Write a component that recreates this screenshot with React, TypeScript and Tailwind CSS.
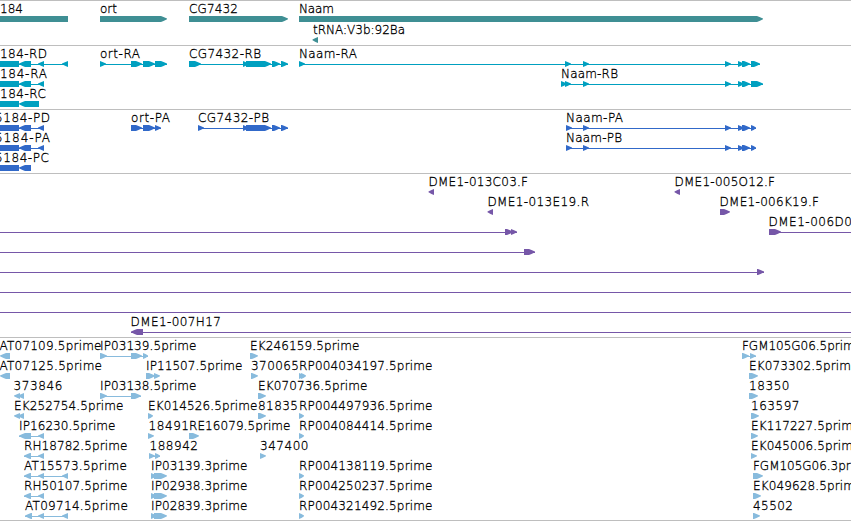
type Label = [text: string, start: number, end: number];
type Exon = [start: number, end: number];
type Row = {
  labels?: Label[];
  right?: Exon[];
  left?: Exon[];
  blocks?: Exon[];
  lines?: Exon[];
};
type TrackData = { name: string; color: string; rowClass: string; heightClass: string; rows: Row[] };

const tracks: TrackData[] = [
  {
    name: 'genes',
    color: '#3f8f94',
    rowClass: 'h-[21px]',
    heightClass: 'h-[45px]',
    rows: [
      {
        labels: [['184', 0, 23], ['ort', 100, 117], ['CG7432', 189, 238], ['Naam', 299, 334]],
        blocks: [[0, 68]],
        right: [[100, 167], [189, 288], [299, 763]],
      },
      { labels: [['tRNA:V3b:92Ba', 313, 405]], left: [[312.5, 318]] },
    ],
  },
  {
    name: 'transcripts',
    color: '#00a0c0',
    rowClass: 'h-5',
    heightClass: 'h-16',
    rows: [
      {
        labels: [['184-RD', 0, 47], ['ort-RA', 100, 140], ['CG7432-RB', 189, 261], ['Naam-RA', 299, 357]],
        lines: [[0, 68], [100, 167], [189, 288], [299, 760]],
        blocks: [[0, 19]],
        left: [[19, 31], [38, 44], [62, 68]],
        right: [
          [100, 106], [131, 142], [143, 155], [155, 167],
          [189, 201], [243, 248], [246, 271], [272, 280], [281, 288],
          [299, 305], [565, 571], [583, 589], [725, 731], [738, 744], [742, 750], [751, 760],
        ],
      },
      {
        labels: [['184-RA', 0, 47], ['Naam-RB', 561, 618]],
        lines: [[0, 44], [561, 763]],
        blocks: [[0, 19]],
        left: [[19, 31], [38, 44]],
        right: [[561, 567], [565, 571], [583, 589], [725, 731], [738, 744], [742, 750], [751, 763]],
      },
      { labels: [['184-RC', 0, 46]], blocks: [[0, 19], [28, 39]], left: [[19, 31]] },
    ],
  },
  {
    name: 'proteins',
    color: '#3169c9',
    rowClass: 'h-5',
    heightClass: 'h-16',
    rows: [
      {
        labels: [['5184-PD', -5, 50], ['ort-PA', 131, 170], ['CG7432-PB', 198, 269], ['Naam-PA', 566, 623]],
        lines: [[0, 44], [131, 161], [198, 288], [566, 756]],
        blocks: [[0, 19]],
        left: [[19, 31], [38, 44]],
        right: [
          [131, 142], [143, 155], [155, 161],
          [198, 204], [243, 248], [246, 271], [272, 280], [281, 288],
          [566, 572], [583, 589], [725, 731], [738, 744], [742, 750], [751, 756],
        ],
      },
      {
        labels: [['5184-PA', -5, 50], ['Naam-PB', 566, 622]],
        lines: [[0, 44], [566, 756]],
        blocks: [[0, 19]],
        left: [[19, 31], [38, 44]],
        right: [[566, 572], [583, 589], [725, 731], [738, 744], [742, 750], [751, 756]],
      },
      { labels: [['5184-PC', -5, 49]], blocks: [[0, 19]], left: [[19, 31]] },
    ],
  },
  {
    name: 'clones',
    color: '#7657a8',
    rowClass: 'h-5',
    heightClass: 'h-[164px]',
    rows: [
      { labels: [['DME1-013C03.F', 428.5, 528], ['DME1-005O12.F', 674.5, 775]], left: [[428.5, 434], [674.5, 680]] },
      { labels: [['DME1-013E19.R', 487.5, 589], ['DME1-006K19.F', 719.5, 819]], left: [[487.5, 493]], right: [[720, 730]] },
      { labels: [['DME1-006D0', 768.5, 852]], lines: [[0, 517], [769, 851]], right: [[505, 513], [511, 517], [769, 781]] },
      { lines: [[0, 535]], right: [[524, 535]] },
      { lines: [[0, 764]], right: [[757, 764]] },
      { lines: [[0, 851]] },
      { lines: [[0, 851]] },
      { labels: [['DME1-007H17', 130.5, 221]], lines: [[131, 851]], left: [[131, 143]] },
    ],
  },
  {
    name: 'ests',
    color: '#88bbdd',
    rowClass: 'h-5',
    heightClass: 'h-[184px]',
    rows: [
      {
        labels: [['AT07109.5prime', -0.5, 101.5], ['IP03139.5prime', 100, 196.5], ['EK246159.5prime', 250, 359.5], ['FGM105G06.5prime', 742, 862]],
        lines: [[100, 148], [742, 756]],
        left: [[0, 10]],
        right: [[100, 107], [131, 142], [143, 148], [250, 258], [742, 749], [750, 756]],
      },
      {
        labels: [['AT07125.5prime', -0.5, 102], ['IP11507.5prime', 146, 242.5], ['370065', 251, 299], ['RP004034197.5prime', 299, 432.5], ['EK073302.5prime', 749, 858.5]],
        left: [[0, 10]],
        right: [[146, 155], [154, 160], [251, 258], [299, 305], [301, 306], [749, 758]],
      },
      {
        labels: [['373846', 13.5, 62.5], ['IP03138.5prime', 100, 196.5], ['EK070736.5prime', 258, 367.5], ['18350', 749, 789.5]],
        lines: [[100, 141]],
        left: [[14, 20], [18, 24]],
        right: [[100, 107], [131, 141], [258, 266], [749, 758]],
      },
      {
        labels: [['EK252754.5prime', 14, 123.5], ['EK014526.5prime', 148, 257.5], ['81835', 258, 298], ['RP004497936.5prime', 299, 432.5], ['163597', 751, 799.5]],
        left: [[14, 20], [18, 24]],
        right: [[148, 153], [258, 266], [299, 304], [751, 759]],
      },
      {
        labels: [['IP16230.5prime', 19, 115.5], ['18491', 148.5, 189], ['RE16079.5prime', 189, 290.5], ['RP004084414.5prime', 299, 432.5], ['EK117227.5prime', 751, 860.5]],
        lines: [[19, 44]],
        left: [[19, 31], [38, 44]],
        right: [[148, 154], [189, 199], [299, 304], [751, 758]],
      },
      {
        labels: [['RH18782.5prime', 24, 127.5], ['188942', 149.5, 198], ['347400', 260, 308.5], ['EK045006.5prime', 751, 860.5]],
        lines: [[24, 44], [149, 160]],
        left: [[24, 31], [38, 44]],
        right: [[149, 155], [155, 160], [260, 266], [751, 757]],
      },
      {
        labels: [['AT15573.5prime', 24, 127], ['IP03139.3prime', 151, 247.5], ['RP004138119.5prime', 299, 432.5], ['FGM105G06.3prime', 753, 873]],
        lines: [[24, 68]],
        left: [[24, 31], [38, 44], [62, 68]],
        right: [[151, 157], [154, 167], [299, 304], [753, 763]],
      },
      {
        labels: [['RH50107.5prime', 24, 127.5], ['IP02938.3prime', 151, 247.5], ['RP004250237.5prime', 299, 432.5], ['EK049628.5prime', 753, 862.5]],
        lines: [[24, 44]],
        left: [[24, 31], [38, 44]],
        right: [[151, 157], [154, 167], [299, 304], [753, 761]],
      },
      {
        labels: [['AT09714.5prime', 25, 128], ['IP02839.3prime', 151, 247.5], ['RP004321492.5prime', 299, 432.5], ['45502', 753, 793]],
        lines: [[25, 68]],
        left: [[25, 32], [38, 44], [62, 68]],
        right: [[151, 157], [154, 167], [299, 304], [753, 760]],
      },
    ],
  },
];

const TOP = 14;
const BOTTOM = 20;

// Exon body with a short stepped head that shows the strand.
function arrow(from: number, to: number) {
  const dir = Math.sign(to - from);
  const head = to - dir * Math.min(6, Math.abs(to - from));
  return `${from},${TOP} ${head},${TOP} ${head + dir * 2.5},${TOP + 1} ${to},${TOP + 2.4} ${to},${TOP + 3.2} ${head + dir * 2.5},${BOTTOM - 1} ${head},${BOTTOM} ${from},${BOTTOM}`;
}

function FeatureRow({ row, color, rowClass }: { row: Row; color: string; rowClass: string }) {
  return (
    <svg className={`block w-[851px] shrink-0 overflow-visible ${rowClass}`} fill={color}>
      {row.lines?.map(([a, b]) => <rect key={`l${a}`} x={a} y={17} width={b - a} height={1} />)}
      {row.blocks?.map(([a, b]) => <rect key={`b${a}`} x={a} y={TOP} width={b - a} height={6} />)}
      {row.right?.map(([a, b]) => <polygon key={`r${a}`} points={arrow(a, b)} />)}
      {row.left?.map(([a, b]) => <polygon key={`f${a}`} points={arrow(b, a)} />)}
      {row.labels?.map(([text, a, b]) => (
        <text key={text} x={a} y={11} textLength={b - a} className="fill-black stroke-black stroke-[0.3px] text-[12px] font-extralight">
          {text}
        </text>
      ))}
    </svg>
  );
}

export default function App() {
  return (
    <main className="flex h-[521px] w-[851px] flex-col overflow-hidden bg-white font-['DejaVu_Sans',sans-serif]">
      {tracks.map((track) => (
        <section
          key={track.name}
          className={`flex shrink-0 flex-col border-t border-[#bebebe] pt-px last:border-b ${track.heightClass}`}
        >
          {track.rows.map((row, i) => (
            <FeatureRow key={i} row={row} color={track.color} rowClass={track.rowClass} />
          ))}
        </section>
      ))}
    </main>
  );
}
